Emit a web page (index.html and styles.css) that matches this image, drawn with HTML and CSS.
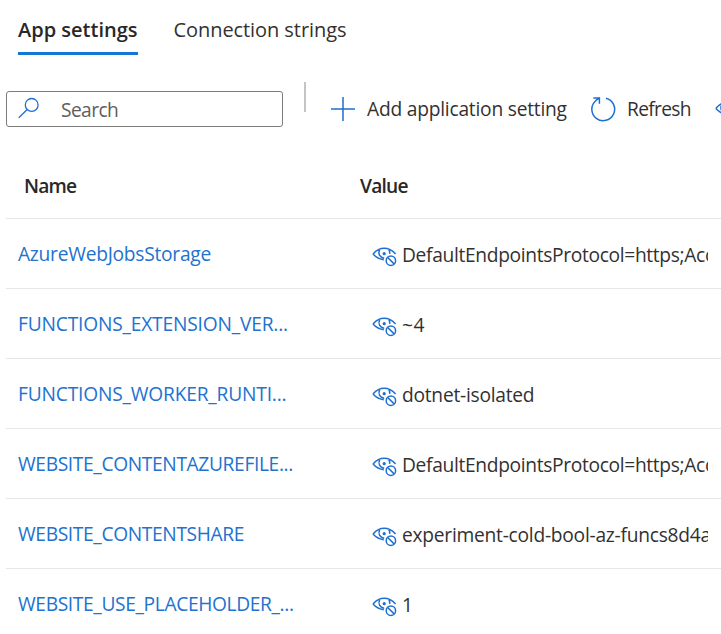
FILE: index.html
```html
<!DOCTYPE html>
<html lang="en">
<head>
<meta charset="utf-8">
<title>App settings</title>
<link rel="stylesheet" href="styles.css">
</head>
<body>
<svg class="defs" width="0" height="0">
  <symbol id="eye" viewBox="0 0 26 22">
    <g fill="none" stroke="currentColor" stroke-width="1.5">
      <path d="M1 9C4.500 5.100 8 3.300 12.200 3.300S20 5.100 23.600 9M1 9c3 3.300 6 5.300 10.800 5.700M7.700 4.600c-2 4 0 8 4.500 8.600M16.800 4.600c.9 1.400 1.100 2.700.8 4.200"/>
      <circle cx="18.900" cy="15.700" r="4.700"/>
      <path d="m15.700 12.500 6.400 6.400"/>
    </g>
    <circle cx="12.200" cy="8.700" r="1.600" fill="currentColor"/>
  </symbol>
</svg>
<nav class="tabs">
  <a class="tab active">App settings</a>
  <a class="tab">Connection strings</a>
</nav>
<div class="toolbar">
  <div class="search">
    <svg width="22" height="22" viewBox="0 0 22 22" fill="none" stroke="currentColor" stroke-width="1.300"><circle cx="13.700" cy="7.900" r="6.400"/><path d="M9.200 12.500.8 20.800"/></svg>
    <span>Search</span>
  </div>
  <i class="divider"></i>
  <button class="command add">
    <svg width="24" height="24" viewBox="0 0 24 24" fill="none" stroke="currentColor" stroke-width="1.500"><path d="M12 0v24M0 12h24"/></svg>
    <span>Add application setting</span>
  </button>
  <button class="command refresh">
    <svg width="26" height="26" viewBox="0 0 26 26" fill="none" stroke="currentColor" stroke-width="1.500"><path d="M16 2.200A11.400 11.400 0 1 1 5.700 4.700L9.300 2M3.400 1.900h6v5.900"/></svg>
    <span>Refresh</span>
  </button>
  <svg class="more" width="26" height="18" viewBox="0 0 26 18" fill="none" stroke="currentColor" stroke-width="1.500"><path d="M.8 8.500c8-9 16-9 24 0-8 8-16 8-24 0M7 4c-2 4-1 7 2 9"/></svg>
</div>
<main class="grid">
  <div class="row header"><b class="name">Name</b><b class="value">Value</b></div>
  <div class="row"><a class="name">AzureWebJobsStorage</a><div class="value"><svg><use href="#eye"/></svg><span class="endpoint">DefaultEndpointsProtocol=https;Acc</span></div></div>
  <div class="row"><a class="name functions">FUNCTIONS_EXTENSION_VER...</a><div class="value"><svg><use href="#eye"/></svg><span class="version">~4</span></div></div>
  <div class="row"><a class="name functions">FUNCTIONS_WORKER_RUNTI...</a><div class="value"><svg><use href="#eye"/></svg><span>dotnet-isolated</span></div></div>
  <div class="row"><a class="name website">WEBSITE_CONTENTAZUREFILE...</a><div class="value"><svg><use href="#eye"/></svg><span class="endpoint">DefaultEndpointsProtocol=https;Acc</span></div></div>
  <div class="row"><a class="name website">WEBSITE_CONTENTSHARE</a><div class="value"><svg><use href="#eye"/></svg><span>experiment-cold-bool-az-funcs8d4a</span></div></div>
  <div class="row"><a class="name website">WEBSITE_USE_PLACEHOLDER_...</a><div class="value"><svg><use href="#eye"/></svg><span>1</span></div></div>
</main>
</body>
</html>
```
FILE: styles.css
```css
* { box-sizing: border-box; }
body {
  margin: 0;
  width: 721px;
  height: 634px;
  overflow: hidden;
  background: #fff;
  color: #323130;
  font: 400 19.200px/28px "Open Sans", "Noto Sans", sans-serif;
}
.defs { display: block; }
svg { flex: none; color: #1f6fd0; }
.tabs {
  display: flex;
  gap: 35.500px;
  height: 55px;
  padding: 16px 18px 0;
  white-space: nowrap;
}
.tab { height: 39px; font-size: 20px; letter-spacing: -.07px; }
.active {
  width: 120px;
  border-bottom: 3px solid #1378d4;
  color: #292827;
  font-weight: 600;
  letter-spacing: 0;
}
.toolbar {
  display: flex;
  align-items: flex-start;
  height: 93px;
  padding: 27px 0 0 6px;
  white-space: nowrap;
}
.toolbar > * { flex: none; }
.search {
  display: flex;
  align-items: center;
  gap: 21px;
  width: 277px;
  height: 36px;
  margin-top: 9px;
  padding: 1px 0 0 11px;
  border: 1px solid #7d7c7b;
  border-radius: 3px;
  color: #605e5c;
  letter-spacing: -.6px;
}
.search svg { margin-top: -3px; }
.divider {
  width: 2px;
  height: 30px;
  margin: 0 25px 0 21px;
  background: #c4c4c4;
}
.command {
  display: flex;
  align-items: center;
  height: 28px;
  margin: 13px 0 0;
  padding: 0;
  border: 0;
  background: none;
  color: inherit;
  font: inherit;
}
.add { gap: 12px; width: 259px; letter-spacing: -.22px; }
.refresh { gap: 11px; width: 125px; letter-spacing: -.68px; }
.more { margin-top: 18px; }
.row {
  display: flex;
  align-items: center;
  height: 70px;
  margin-left: 6px;
  padding-left: 12px;
  border-bottom: 1px solid #e8e7e6;
  white-space: nowrap;
}
.row .name { width: 354px; color: #2272ce; letter-spacing: -.26px; }
.row .functions { letter-spacing: -.19px; }
.row .website { letter-spacing: -.36px; }
.header { height: 71px; padding: 6px 0 0 18px; }
.row.header b { color: #292827; font-weight: 600; letter-spacing: -.78px; }
.row.header .name { width: 336px; }
div.value {
  display: flex;
  align-items: center;
  width: 336px;
  padding-top: 2px;
  overflow: hidden;
  letter-spacing: -.25px;
}
.endpoint { letter-spacing: -.33px; }
.version { letter-spacing: .5px; }
.value svg { width: 26px; height: 22px; margin: 3px 4px 0 0; }
```
